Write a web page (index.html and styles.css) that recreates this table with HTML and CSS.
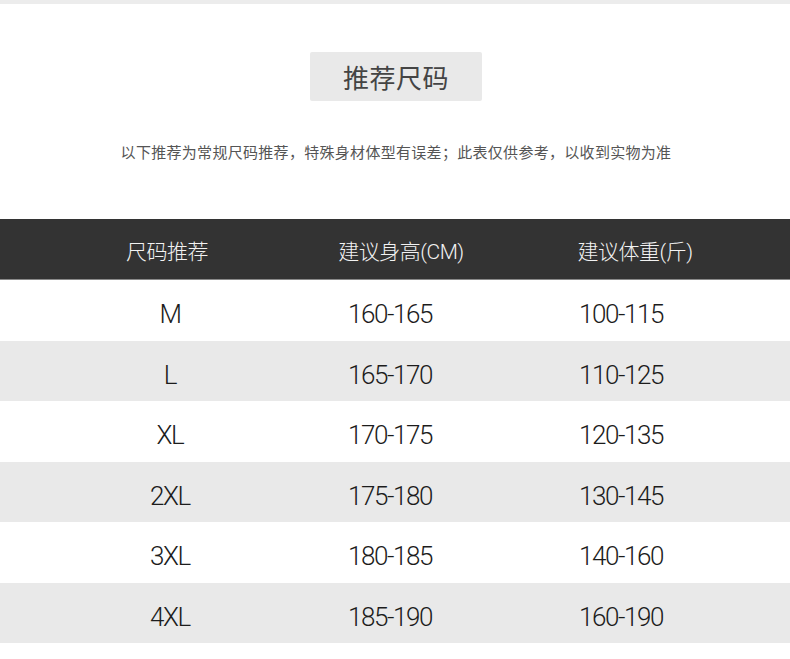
FILE: index.html
```html
<!DOCTYPE html>
<html lang="zh-CN">
<head>
<meta charset="utf-8">
<title>推荐尺码</title>
<link rel="stylesheet" href="styles.css">
</head>
<body>
<div class="topbar"></div>
<div class="title-wrap"><div class="title">推荐尺码</div></div>
<p class="note">以下推荐为常规尺码推荐，特殊身材体型有误差；此表仅供参考，以收到实物为准</p>
<div class="table">
  <div class="head">
    <div class="hcell">尺码推荐</div>
    <div class="hcell">建议身高(CM)</div>
    <div class="hcell">建议体重(斤)</div>
  </div>
  <div class="row"><div class="cell">M</div><div class="cell">160-165</div><div class="cell">100-115</div></div>
  <div class="row alt"><div class="cell">L</div><div class="cell">165-170</div><div class="cell">110-125</div></div>
  <div class="row"><div class="cell">XL</div><div class="cell">170-175</div><div class="cell">120-135</div></div>
  <div class="row alt"><div class="cell">2XL</div><div class="cell">175-180</div><div class="cell">130-145</div></div>
  <div class="row"><div class="cell">3XL</div><div class="cell">180-185</div><div class="cell">140-160</div></div>
  <div class="row alt"><div class="cell">4XL</div><div class="cell">185-190</div><div class="cell">160-190</div></div>
</div>
</body>
</html>
```
FILE: styles.css
```css
html, body {
  margin: 0;
  padding: 0;
  background: #ffffff;
}
body {
  font-family: "Noto Sans CJK SC", "Noto Sans", sans-serif;
  color: #333;
}
.topbar {
  height: 4px;
  background: #ececec;
}
.title-wrap {
  display: flex;
  justify-content: center;
  padding-top: 48px;
}
.title {
  width: 172px;
  height: 49px;
  margin-left: 2px;
  background: #e9e9e9;
  border-radius: 2px;
  display: flex;
  align-items: center;
  justify-content: center;
  font-size: 26px;
  color: #444;
  letter-spacing: 0.5px;
}
.note {
  margin: 39px 0 0;
  text-align: center;
  font-size: 15px;
  line-height: 24px;
  color: #555;
  letter-spacing: 0.3px;
  padding-left: 2px;
}
.table {
  margin-top: 55px;
}
.head {
  height: 61px;
  background: #333333;
  border-bottom: 1px solid #8a8a8a;
  box-sizing: border-box;
  display: grid;
  grid-template-columns: repeat(3, 200px);
  column-gap: 34px;
  padding-left: 67px;
  align-items: center;
}
.hcell {
  text-align: center;
  color: #f2f2f2;
  font-size: 21px;
  letter-spacing: -0.5px;
  font-family: "Roboto", "Noto Sans CJK SC", sans-serif;
  font-weight: 300;
  padding-top: 2px;
}
.row {
  height: 60.5px;
  display: grid;
  grid-template-columns: 200px 200px 222px;
  column-gap: 20px;
  padding-left: 70px;
  align-items: center;
  background: #ffffff;
}
.row.alt {
  background: #e9e9e9;
}
.cell {
  text-align: center;
  font-family: "Roboto", sans-serif;
  font-weight: 300;
  font-size: 26px;
  letter-spacing: -1.4px;
  color: #1c1c1c;
  padding-top: 8px;
}
```
